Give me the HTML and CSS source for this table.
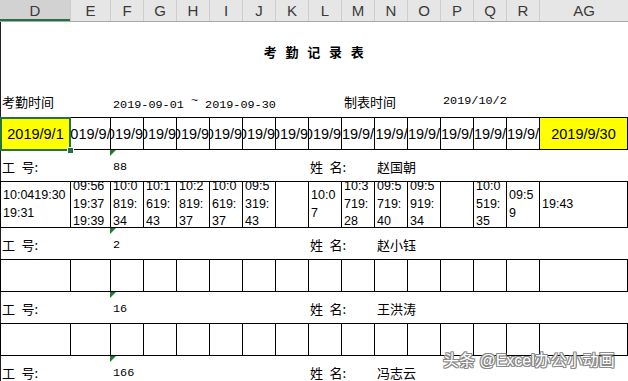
FILE: index.html
```html
<!DOCTYPE html>
<html lang="zh">
<head>
<meta charset="utf-8">
<link rel="stylesheet" href="styles.css">
</head>
<body>
<div class="sheet">
  <div class="colhead">
    <div class="ch sel">D</div><div class="ch">E</div><div class="ch">F</div><div class="ch">G</div><div class="ch">H</div><div class="ch">I</div><div class="ch">J</div><div class="ch">K</div><div class="ch">L</div><div class="ch">M</div><div class="ch">N</div><div class="ch">O</div><div class="ch">P</div><div class="ch">Q</div><div class="ch">R</div><div class="ch">AG</div>
  </div>
  <div class="body">
    <div class="title">考 勤 记 录 表</div>
    <div class="info">
      <div class="lbl cjk c1">考勤时间</div>
      <div class="lbl mono c3">2019-09-01 <span class="tilde">~</span> 2019-09-30</div>
      <div class="lbl cjk c10">制表时间</div>
      <div class="lbl mono c13">2019/10/2</div>
    </div>
    <div class="grid dates">
      <div class="cell d yellow selcell">2019/9/1</div>
      <div class="cell d">2019/9/2</div>
      <div class="cell d">2019/9/3</div>
      <div class="cell d">2019/9/4</div>
      <div class="cell d">2019/9/5</div>
      <div class="cell d">2019/9/6</div>
      <div class="cell d">2019/9/7</div>
      <div class="cell d">2019/9/8</div>
      <div class="cell d">2019/9/9</div>
      <div class="cell d">2019/9/10</div>
      <div class="cell d">2019/9/11</div>
      <div class="cell d">2019/9/12</div>
      <div class="cell d">2019/9/13</div>
      <div class="cell d">2019/9/14</div>
      <div class="cell d">2019/9/15</div>
      <div class="cell d yellow">2019/9/30</div>
    </div>
    <div class="person">
      <div class="lbl cjk c1">工&ensp;号:</div>
      <div class="lbl mono c3 flag">88</div>
      <div class="lbl cjk c9">姓&ensp;名:</div>
      <div class="lbl cjk c11">赵国朝</div>
    </div>
    <div class="grid times">
      <div class="cell t"><div class="tx">10:0419:3019:31</div></div>
      <div class="cell t"><div class="tx">09:5619:3719:39</div></div>
      <div class="cell t"><div class="tx">10:0819:34</div></div>
      <div class="cell t"><div class="tx">10:1619:43</div></div>
      <div class="cell t"><div class="tx">10:2819:37</div></div>
      <div class="cell t"><div class="tx">10:0619:37</div></div>
      <div class="cell t"><div class="tx">09:5319:43</div></div>
      <div class="cell t"><div class="tx"></div></div>
      <div class="cell t"><div class="tx">10:07</div></div>
      <div class="cell t"><div class="tx">10:3719:28</div></div>
      <div class="cell t"><div class="tx">09:5719:40</div></div>
      <div class="cell t"><div class="tx">09:5919:34</div></div>
      <div class="cell t"><div class="tx"></div></div>
      <div class="cell t"><div class="tx">10:0519:35</div></div>
      <div class="cell t"><div class="tx">09:59</div></div>
      <div class="cell t"><div class="tx">19:43</div></div>
    </div>
    <div class="person">
      <div class="lbl cjk c1">工&ensp;号:</div>
      <div class="lbl mono c3 flag">2</div>
      <div class="lbl cjk c9">姓&ensp;名:</div>
      <div class="lbl cjk c11">赵小钰</div>
    </div>
    <div class="grid empty">
      <div class="cell"></div><div class="cell"></div><div class="cell"></div><div class="cell"></div><div class="cell"></div><div class="cell"></div><div class="cell"></div><div class="cell"></div><div class="cell"></div><div class="cell"></div><div class="cell"></div><div class="cell"></div><div class="cell"></div><div class="cell"></div><div class="cell"></div><div class="cell"></div>
    </div>
    <div class="person">
      <div class="lbl cjk c1">工&ensp;号:</div>
      <div class="lbl mono c3 flag">16</div>
      <div class="lbl cjk c9">姓&ensp;名:</div>
      <div class="lbl cjk c11">王洪涛</div>
    </div>
    <div class="grid empty">
      <div class="cell"></div><div class="cell"></div><div class="cell"></div><div class="cell"></div><div class="cell"></div><div class="cell"></div><div class="cell"></div><div class="cell"></div><div class="cell"></div><div class="cell"></div><div class="cell"></div><div class="cell"></div><div class="cell"></div><div class="cell"></div><div class="cell"></div><div class="cell"></div>
    </div>
    <div class="person">
      <div class="lbl cjk c1">工&ensp;号:</div>
      <div class="lbl mono c3 flag">166</div>
      <div class="lbl cjk c9">姓&ensp;名:</div>
      <div class="lbl cjk c11">冯志云</div>
    </div>
  </div>
  <div class="watermark">头条 @Excel办公小动画</div>
</div>
</body>
</html>
```
FILE: styles.css
```css
html, body {
  margin: 0;
  padding: 0;
  background: #fff;
}
.sheet {
  position: relative;
  width: 628px;
  height: 381px;
  overflow: hidden;
  background: #fff;
  font-family: "Liberation Sans", "Noto Sans CJK SC", sans-serif;
  color: #000;
}
.colhead {
  display: grid;
  grid-template-columns: 70px 40px repeat(13, 33px) 89px;
  height: 22px;
  box-sizing: border-box;
  background: #e6e6e6;
  border-bottom: 1px solid #a9a9a9;
}
.ch {
  display: flex;
  align-items: center;
  justify-content: center;
  border-left: 1px solid #cdcdcd;
  font-size: 15px;
  color: #3a3a3a;
}
.ch.sel {
  border-left: 0;
  background: #d2d2d2;
  box-shadow: inset 0 -2px 0 #217346;
}
.body {
  box-shadow: inset 1px 0 0 #1f1f1f;
  height: 359px;
}
.title {
  height: 63px;
  box-sizing: border-box;
  padding-top: 21px;
  padding-left: 2px;
  line-height: 18px;
  text-align: center;
  font-family: "Noto Sans CJK SC", sans-serif;
  font-weight: bold;
  font-size: 13px;
  letter-spacing: 2.4px;
  word-spacing: 1px;
}
.info, .person {
  display: grid;
  grid-template-columns: 70px 40px repeat(13, 33px) 88px;
  box-sizing: border-box;
}
.info {
  height: 32px;
  padding-top: 2px;
}
.info .lbl {
  line-height: 30px;
}
.info .mono {
  line-height: 28px;
}
.person {
  height: 31px;
  padding-top: 3px;
}
.person .lbl {
  line-height: 28px;
}
.lbl {
  display: block;
  white-space: nowrap;
  padding-left: 3px;
  position: relative;
}
.cjk {
  font-family: "Noto Sans CJK SC", sans-serif;
  font-size: 13px;
}
.mono {
  font-family: "Liberation Mono", monospace;
  font-size: 11.8px;
}
.tilde {
  vertical-align: 4px;
}
.c1 { grid-column: 1 / span 2; padding-left: 2px; }
.c3 { grid-column: 3 / span 6; }
.c9 { grid-column: 9 / span 2; padding-left: 2px; }
.c10 { grid-column: 10 / span 3; }
.c11 { grid-column: 11 / span 4; }
.c13 { grid-column: 13 / span 3; }
.flag::before {
  content: "";
  position: absolute;
  left: 0;
  top: -3px;
  width: 0;
  height: 0;
  border-top: 6px solid #1f7a34;
  border-right: 6px solid transparent;
}
.grid {
  display: grid;
  grid-template-columns: 70px 40px repeat(13, 33px) 88px;
  width: 628px;
  box-sizing: border-box;
  border-top: 1px solid #000;
  border-bottom: 1px solid #000;
  border-right: 1px solid #000;
}
.cell {
  border-left: 1px solid #000;
  overflow: hidden;
  display: flex;
  align-items: center;
  min-width: 0;
}
.dates { height: 33px; }
.times { height: 47px; }
.empty { height: 33px; }
.d {
  justify-content: center;
  white-space: nowrap;
  font-size: 14.5px;
  padding-top: 1px;
  box-sizing: border-box;
}
.yellow { background: #ffff00; }
.selcell {
  position: relative;
  overflow: visible;
}
.selcell::after {
  content: "";
  position: absolute;
  left: -1px;
  top: -1px;
  right: -1px;
  bottom: -2px;
  border: 2px solid #217346;
}
.selcell::before {
  content: "";
  position: absolute;
  right: -4px;
  bottom: -5px;
  width: 5px;
  height: 5px;
  background: #217346;
  border: 1px solid #fff;
  z-index: 2;
}
.t {
  padding: 0 2px 0 2px;
  font-size: 12.5px;
  line-height: 17.5px;
}
.tx {
  flex: 1 1 0;
  min-width: 0;
  word-break: break-all;
}
.watermark {
  position: absolute;
  left: 443px;
  top: 351px;
  font-family: "Liberation Sans", "Noto Sans CJK SC", sans-serif;
  font-size: 16px;
  line-height: 20px;
  white-space: nowrap;
  color: #fff;
  text-shadow: 1px 0 0 #8a8a8a, -1px 0 0 #8a8a8a, 0 1px 0 #8a8a8a, 0 -1px 0 #8a8a8a, 1px 1px 0 #8a8a8a, -1px -1px 0 #8a8a8a, 1px -1px 0 #8a8a8a, -1px 1px 0 #8a8a8a;
}
```
